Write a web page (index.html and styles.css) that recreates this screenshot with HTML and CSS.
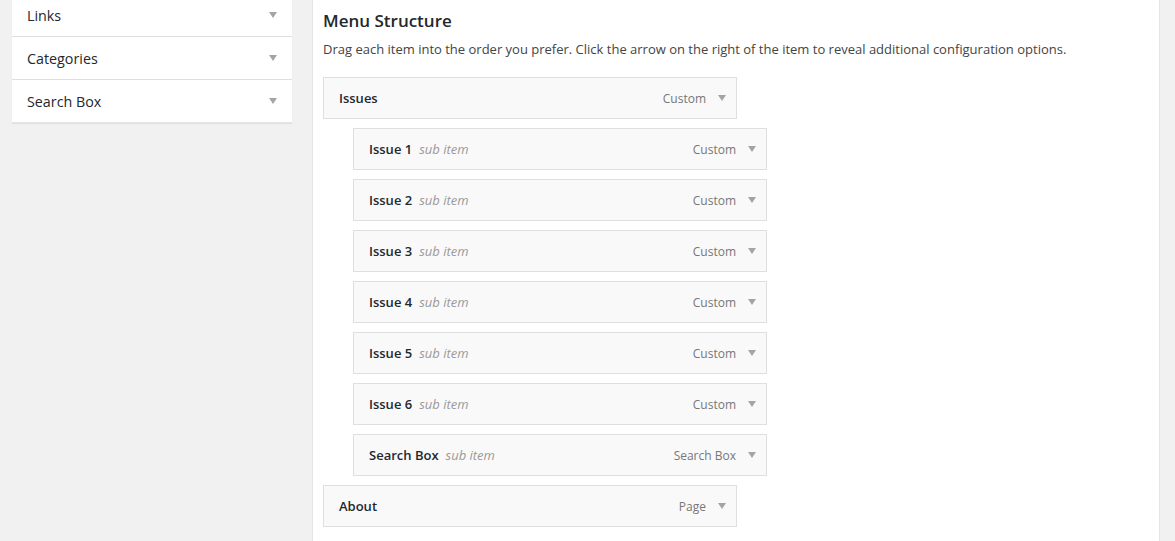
FILE: index.html
```html
<!DOCTYPE html>
<html>
<head>
<meta charset="utf-8">
<link rel="stylesheet" href="styles.css">
</head>
<body>
<div class="page">
  <div class="side">
    <div class="acc-row"><span>Links</span><i class="arrow"></i></div>
    <div class="acc-row"><span>Categories</span><i class="arrow"></i></div>
    <div class="acc-row"><span>Search Box</span><i class="arrow"></i></div>
  </div>
  <div class="main">
    <h3 class="title">Menu Structure</h3>
    <p class="desc">Drag each item into the order you prefer. Click the arrow on the right of the item to reveal additional configuration options.</p>
    <ul class="menu">
      <li class="item"><span class="name">Issues</span><span class="type">Custom</span><i class="arrow"></i></li>
      <li class="item sub"><span class="name">Issue 1</span><em class="note">sub item</em><span class="type">Custom</span><i class="arrow"></i></li>
      <li class="item sub"><span class="name">Issue 2</span><em class="note">sub item</em><span class="type">Custom</span><i class="arrow"></i></li>
      <li class="item sub"><span class="name">Issue 3</span><em class="note">sub item</em><span class="type">Custom</span><i class="arrow"></i></li>
      <li class="item sub"><span class="name">Issue 4</span><em class="note">sub item</em><span class="type">Custom</span><i class="arrow"></i></li>
      <li class="item sub"><span class="name">Issue 5</span><em class="note">sub item</em><span class="type">Custom</span><i class="arrow"></i></li>
      <li class="item sub"><span class="name">Issue 6</span><em class="note">sub item</em><span class="type">Custom</span><i class="arrow"></i></li>
      <li class="item sub"><span class="name">Search Box</span><em class="note">sub item</em><span class="type">Search Box</span><i class="arrow"></i></li>
      <li class="item"><span class="name">About</span><span class="type">Page</span><i class="arrow"></i></li>
    </ul>
  </div>
  <div class="rest"></div>
</div>
</body>
</html>
```
FILE: styles.css
```css
html, body {
  margin: 0;
  padding: 0;
  background: #f1f1f1;
  font-family: "Open Sans", "Liberation Sans", sans-serif;
  color: #23282d;
  height: 100%;
  overflow: hidden;
}
.page {
  display: flex;
  align-items: stretch;
  height: 541px;
}
.side {
  width: 280px;
  margin-left: 12px;
  margin-top: -6px;
  align-self: flex-start;
  background: #fff;
  box-shadow: 0 1px 1px rgba(0,0,0,0.06);
}
.acc-row {
  display: flex;
  align-items: center;
  justify-content: space-between;
  height: 42px;
  padding: 0 15px 0 15px;
  border-bottom: 1px solid #dfdfdf;
  font-size: 14.3px;
  font-weight: 400;
  color: #23282d;
}
.acc-row:last-child { border-bottom: 1px solid #e4e4e4; }
.arrow {
  display: inline-block;
  width: 0;
  height: 0;
  border-left: 4px solid transparent;
  border-right: 4px solid transparent;
  border-top: 6px solid #a0a5aa;
}
.main {
  width: 836px;
  margin-left: 20px;
  background: #fff;
  border-left: 1px solid #e5e5e5;
  border-right: 1px solid #e5e5e5;
  padding: 9px 0 0 10px;
}
.title {
  margin: 0;
  font-size: 17px;
  line-height: 24px;
  font-weight: 600;
  color: #23282d;
}
.desc {
  margin: 6px 0 0 0;
  font-size: 13px;
  line-height: 20px;
  color: #444;
}
.menu {
  list-style: none;
  margin: 18px 0 0 0;
  padding: 0;
}
.item {
  display: flex;
  align-items: center;
  height: 40px;
  border: 1px solid #dfdfdf;
  background: #f9f9f9;
  margin-bottom: 9px;
  padding: 0 10px 0 15px;
  box-sizing: content-box;
  width: 387px;
  font-size: 13px;
}
.item.sub { margin-left: 30px; }
.name {
  font-weight: 600;
  color: #23282d;
}
.note {
  margin-left: 7px;
  color: #999;
  font-style: italic;
}
.type {
  margin-left: auto;
  color: #777;
  font-size: 12px;
  margin-right: 12px;
}
.rest { flex: 1; }
```
